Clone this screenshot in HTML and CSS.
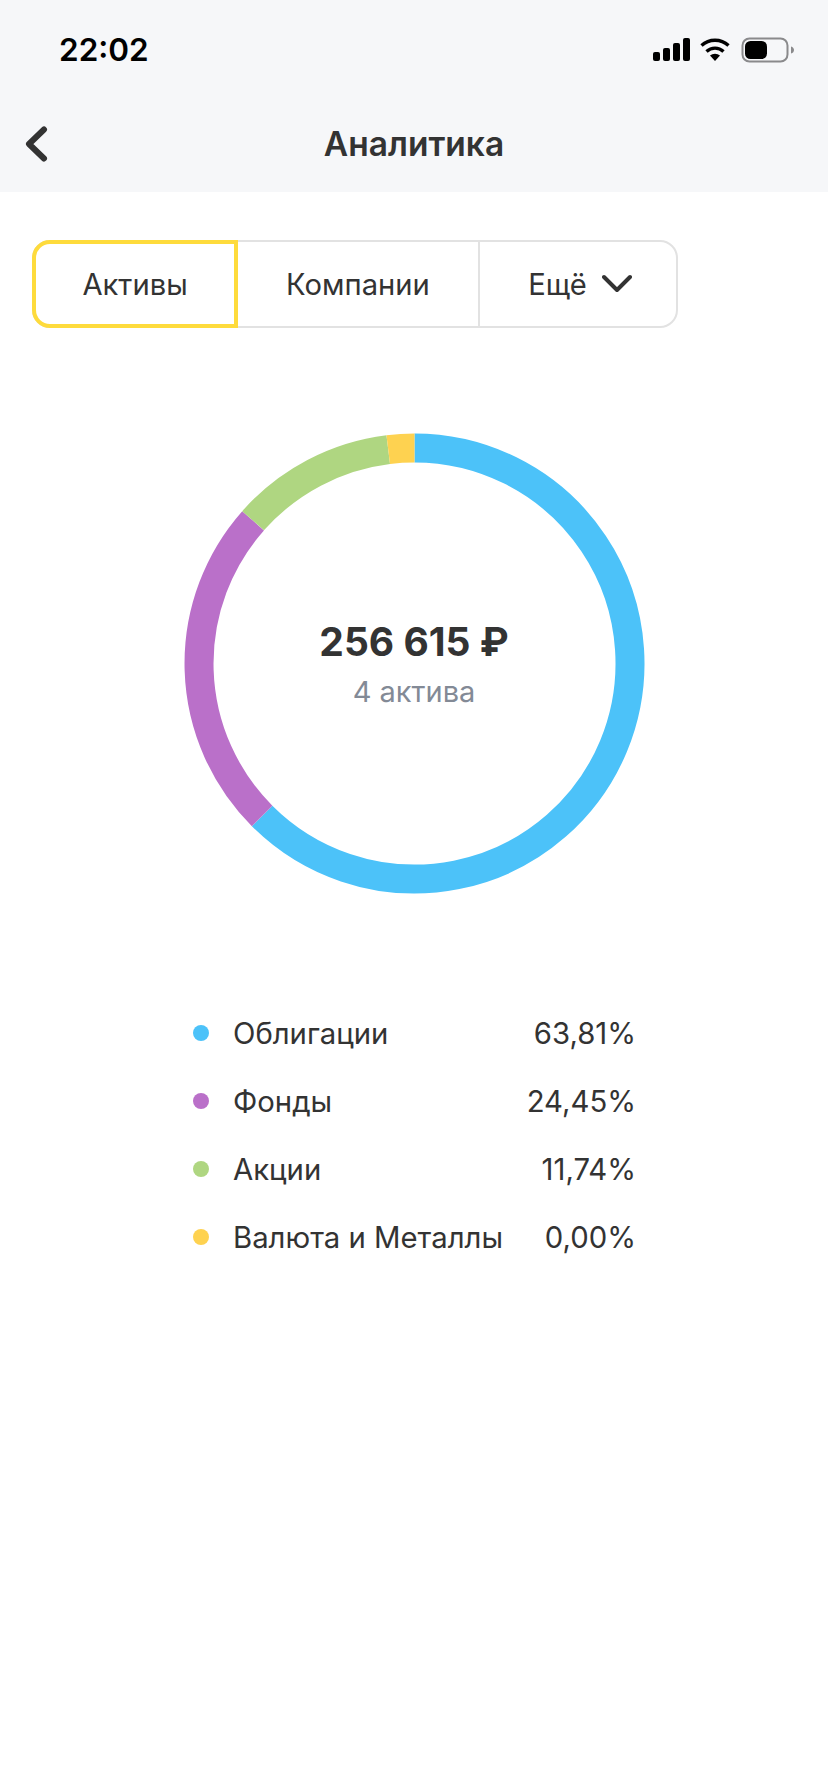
FILE: index.html
```html
<!DOCTYPE html>
<html lang="ru">
<head>
  <meta charset="UTF-8" />
  <title>Аналитика</title>
  <link rel="stylesheet" href="styles.css">
</head>
<body>
  <div class="top">
    <!-- Status bar -->
    <div class="status">
      <span class="time">22:02</span>
      <svg class="status-icons" width="144" height="28" viewBox="0 0 144 28">
        <g fill="#000">
          <rect x="1" y="15" width="7" height="9" rx="2"/>
          <rect x="11" y="11" width="7" height="13" rx="2"/>
          <rect x="21" y="6" width="7" height="18" rx="2"/>
          <rect x="31" y="1" width="7" height="23" rx="2"/>
          <path d="M63 24l-5-5.400a7.500 7.500 0 0 1 10 0z"/>
        </g>
        <g fill="none" stroke="#000" stroke-width="3.400">
          <path d="M54.500 14.500a12.500 12.500 0 0 1 17 0"/>
          <path d="M49.500 8.500a20 20 0 0 1 27 0"/>
        </g>
        <rect x="90.500" y="1.500" width="45" height="23" rx="7" fill="none" stroke="#8a8a8c" stroke-width="2"/>
        <rect x="93" y="4" width="22" height="18" rx="5.500" fill="#000"/>
        <path d="M139 9.500c2 .5 3 2 3 3.500s-1 3-3 3.500z" fill="#8a8a8c"/>
      </svg>
    </div>
    <!-- Nav -->
    <div class="nav">
      <svg class="back" width="24" height="36" viewBox="0 0 24 36">
        <path d="M20 3.500L5 18l15 14.500" fill="none" stroke="#333" stroke-width="6" stroke-linecap="round" stroke-linejoin="round"/>
      </svg>
      <h1>Аналитика</h1>
    </div>
  </div>

  <div class="tabs">
    <div class="tab tab-active">Активы</div>
    <div class="tab tab-mid">Компании</div>
    <div class="tab tab-more">
      Ещё
      <svg width="30" height="20" viewBox="0 0 30 20">
        <path d="M2 3L15 16 28 3" fill="none" stroke="#333" stroke-width="4" stroke-linecap="round" stroke-linejoin="round"/>
      </svg>
    </div>
  </div>

  <!-- Donut -->
  <div class="chart">
    <svg width="461" height="461" viewBox="0 0 461 461">
      <g fill="none" stroke-width="29">
        <path stroke="#4cc2f9" d="M230.500 15A215.500 215.500 0 1 1 78.120 382.880"/>
        <path stroke="#ba70c9" d="M78.120 382.880A215.500 215.500 0 0 1 69.090 87.770"/>
        <path stroke="#afd681" d="M69.090 87.770A215.500 215.500 0 0 1 204.240 16.600"/>
        <path stroke="#fed250" d="M204.240 16.600A215.500 215.500 0 0 1 230.500 15"/>
      </g>
    </svg>
    <div class="chart-label">
      <div class="total">256 615 ₽</div>
      <div class="count">4 актива</div>
    </div>
  </div>

  <div class="legend">
    <div class="legend-row"><i class="dot dot-blue"></i><span class="name">Облигации</span><span>63,81%</span></div>
    <div class="legend-row"><i class="dot dot-purple"></i><span class="name">Фонды</span><span>24,45%</span></div>
    <div class="legend-row"><i class="dot dot-green"></i><span class="name">Акции</span><span>11,74%</span></div>
    <div class="legend-row"><i class="dot dot-yellow"></i><span class="name">Валюта и Металлы</span><span>0,00%</span></div>
  </div>
</body>
</html>
```

FILE: styles.css
```css
body {
  margin: 0;
  height: 1792px;
  overflow: hidden;
  background: #fff;
  color: #333;
  font-family: Inter, "Noto Sans", sans-serif;
}
.top {
  background: #f6f7f9;
  height: 192px;
}
.status {
  display: flex;
  justify-content: space-between;
  align-items: center;
  height: 100px;
  padding: 0 32px 0 59px;
}
.time {
  font-size: 31.500px;
  font-weight: 600;
  color: #000;
  margin-bottom: 2px;
}
.status-icons {
  margin-top: 1px;
}
.nav {
  position: relative;
  height: 88px;
  display: flex;
  align-items: center;
  justify-content: center;
}
.nav h1 {
  margin: 0;
  font-size: 33.500px;
  font-weight: 600;
  color: #333;
}
.back {
  position: absolute;
  left: 24px;
  top: 26px;
}
.tabs {
  display: flex;
  width: 646px;
  height: 88px;
  margin: 48px 0 0 32px;
  box-sizing: border-box;
  border: 2px solid #e2e2e2;
  border-radius: 18px;
  font-size: 29.200px;
}
.tab {
  display: flex;
  align-items: center;
  justify-content: center;
  box-sizing: border-box;
}
.tab-active {
  width: 206px;
  margin: -2px 0 -2px -2px;
  border: 4px solid #fedb3c;
  border-radius: 18px 0 0 18px;
}
.tab-mid {
  width: 242px;
  border-right: 2px solid #e2e2e2;
}
.tab-more {
  flex: 1;
  gap: 15px;
  padding-left: 4px;
}
.chart {
  position: relative;
  width: 461px;
  height: 461px;
  margin: 105px auto 0;
}
.chart svg {
  display: block;
}
.chart-label {
  position: absolute;
  top: 186px;
  left: 0;
  right: 0;
  text-align: center;
}
.total {
  font-size: 39px;
  font-weight: 700;
  line-height: 46px;
}
.count {
  margin-top: 9px;
  font-size: 29px;
  line-height: 36px;
  color: #838a96;
}
.legend {
  width: 443px;
  margin: 105px 0 0 193px;
  font-size: 29.300px;
}
.legend-row {
  display: flex;
  align-items: center;
  height: 68px;
}
.name {
  flex: 1;
}
.dot {
  width: 16px;
  height: 16px;
  border-radius: 50%;
  margin-right: 24px;
}
.dot-blue { background: #4cc2f9; }
.dot-purple { background: #ba70c9; }
.dot-green { background: #afd681; }
.dot-yellow { background: #fed250; }
```
